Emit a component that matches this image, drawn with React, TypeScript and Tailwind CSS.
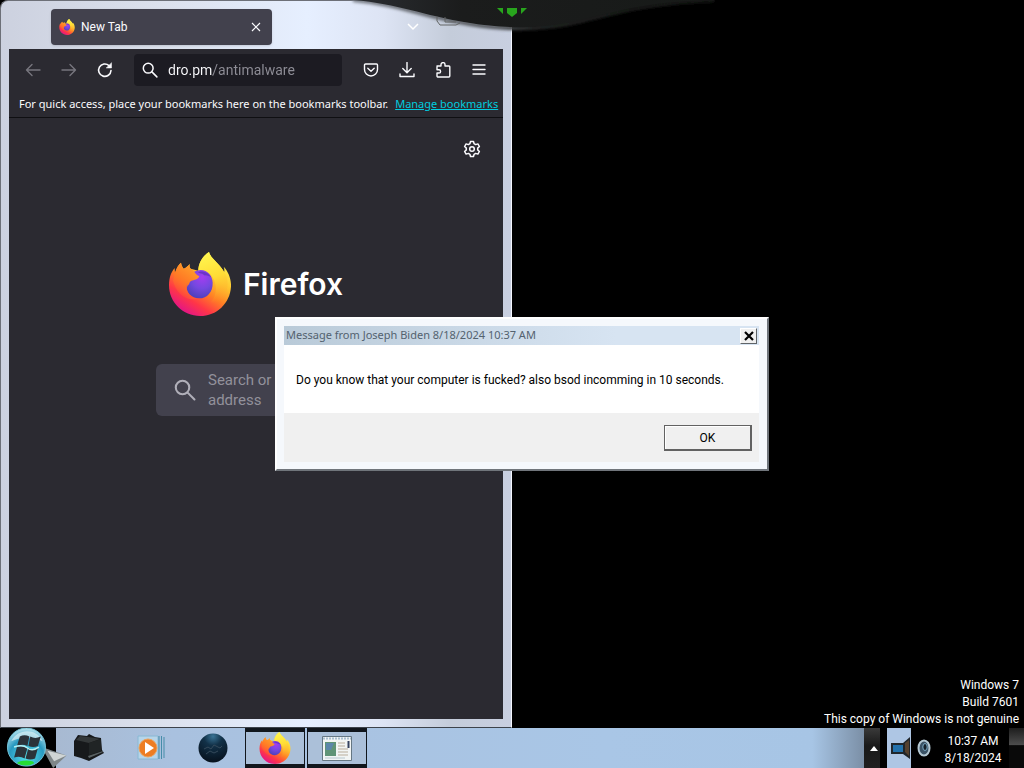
import React from "react";

function FirefoxLogo({ id, className }: { id: string; className: string }) {
  return (
    <svg viewBox="0 0 186 192" className={className} aria-hidden="true">
      <defs>
        <linearGradient id={`${id}-body`} x1="0.8" y1="0.1" x2="0.25" y2="0.95">
          <stop offset="0" stopColor="#fff44f" />
          <stop offset="0.3" stopColor="#ffc52e" />
          <stop offset="0.55" stopColor="#ff8024" />
          <stop offset="0.78" stopColor="#ff3647" />
          <stop offset="1" stopColor="#e31587" />
        </linearGradient>
        <radialGradient id={`${id}-orb`} cx="0.6" cy="0.25" r="0.8">
          <stop offset="0" stopColor="#a33df0" />
          <stop offset="0.5" stopColor="#7548e0" />
          <stop offset="1" stopColor="#4a3fb8" />
        </radialGradient>
        <linearGradient id={`${id}-fox`} x1="0.7" y1="0" x2="0.2" y2="1">
          <stop offset="0" stopColor="#ffa32b" />
          <stop offset="0.5" stopColor="#ff7a25" />
          <stop offset="1" stopColor="#ff4a3c" stopOpacity="0.2" />
        </linearGradient>
        <linearGradient id={`${id}-flame`} x1="0.4" y1="0" x2="0.6" y2="1">
          <stop offset="0" stopColor="#fff64f" />
          <stop offset="0.5" stopColor="#ffdc35" />
          <stop offset="1" stopColor="#ff9a2a" stopOpacity="0" />
        </linearGradient>
      </defs>
      <path
        fill={`url(#${id}-body)`}
        d="M120 0C123 14 140 27 152 41C158 48 162 54 165 61C167 54 166 49 164 44C179 60 187 82 186 104C183 154 143 192 93 192C42 192 0 151 0 100C0 76 7 59 17 48L18 62C23 47 28 39 36 32C37 39 40 45 44 50C51 48 57 42 62 36C61 43 62 47 65 50L88 56C88 32 102 12 120 0Z"
      />
      <path
        fill={`url(#${id}-flame)`}
        d="M120 0C123 14 140 27 152 41C176 68 184 98 166 132C156 152 136 156 126 150C148 126 144 88 124 66C112 56 98 56 88 60C87 32 102 12 120 0Z"
      />
      <path
        fill={`url(#${id}-orb)`}
        d="M84 56C110 48 130 68 131 92C132 120 114 139 91 139C66 139 50 120 52 97C53 76 65 62 84 56Z"
      />
      <path
        fill={`url(#${id}-fox)`}
        d="M18 62C23 47 28 39 36 32C37 39 40 45 44 50C51 48 57 42 62 36C61 43 62 47 65 50C76 56 79 67 91 73C87 84 76 83 66 87C60 90 63 97 56 101C48 112 60 134 84 140C50 150 20 120 12 86Z"
      />
      <path fill="#6a35c8" d="M86 60C102 54 122 64 127 76C116 68 110 72 104 68C99 63 92 66 86 60Z" />
    </svg>
  );
}

function SearchIcon({ className }: { className: string }) {
  return (
    <svg viewBox="0 0 16 16" className={className} fill="none" stroke="currentColor" strokeWidth="1.5" strokeLinecap="round" aria-hidden="true">
      <circle cx="6.2" cy="6.2" r="4.9" />
      <path d="M9.9 9.9l5 5" />
    </svg>
  );
}

const iconProps = {
  viewBox: "0 0 16 16",
  className: "size-4",
  fill: "none",
  stroke: "currentColor",
  strokeWidth: 1.4,
  strokeLinecap: "round" as const,
  strokeLinejoin: "round" as const,
  "aria-hidden": true,
};

function ToolButton({ label, children, dim }: { label: string; children: React.ReactNode; dim?: boolean }) {
  return (
    <button type="button" aria-label={label} className={dim ? "flex size-9 items-center justify-center text-[#77767e]" : "flex size-9 items-center justify-center text-[#fbfbfe]"}>
      {children}
    </button>
  );
}

function BrowserWindow() {
  return (
    <section className="absolute inset-y-0 left-0 flex w-1/2 flex-col rounded-tl-lg border border-r-[#f4f6ff] border-t-[#6d7078] border-b-[#3d434b] border-l-[#6d7078] bg-[linear-gradient(90deg,#ccd1df_0%,#dbe0ec_30%,#e6efff_60%,#dde4f4_75%,#c4ccda_88%,#c8cfe0_100%)] pr-2 pb-2 pl-2">
      <header className="flex h-12 items-center">
        <div className="mt-1 ml-[42px] flex h-9 w-[221px] items-center gap-1.5 rounded bg-[#42414d] px-2 text-[12px] text-[#fbfbfe] shadow">
          <FirefoxLogo id="tab" className="h-4 w-4" />
          <span className="flex-1">New Tab</span>
          <button type="button" aria-label="Close tab" className="flex size-4 items-center justify-center">
            <svg viewBox="0 0 10 10" className="size-2.5" stroke="currentColor" strokeWidth="1.2" aria-hidden="true">
              <path d="M1 1l8 8M9 1L1 9" />
            </svg>
          </button>
        </div>
        <div className="flex flex-1 items-center justify-end pr-[84px] text-white">
          <svg viewBox="0 0 12 8" className="mt-1 h-2 w-3" fill="none" stroke="currentColor" strokeWidth="1.5" aria-hidden="true">
            <path d="M1 1l5 5 5-5" />
          </svg>
        </div>
      </header>

      <div className="flex min-h-0 flex-1 flex-col overflow-hidden bg-[#2b2a31] text-[#fbfbfe]">
        <nav className="flex h-[42px] items-center pl-1.5">
          <ToolButton label="Back" dim>
            <svg {...iconProps}><path d="M15 8H1.5M7 2.5L1.5 8 7 13.5" /></svg>
          </ToolButton>
          <ToolButton label="Forward" dim>
            <svg {...iconProps}><path d="M1 8h13.500M9 2.500L14.500 8 9 13.500" /></svg>
          </ToolButton>
          <ToolButton label="Reload">
            <svg {...iconProps} strokeWidth={1.6}>
              <path d="M14 8.500A6.200 6.200 0 1 1 12 3.600" />
              <path d="M14.500 1v5h-5z" fill="currentColor" strokeWidth="0.5" />
            </svg>
          </ToolButton>
          <div className="ml-[11px] flex h-8 min-w-0 flex-1 items-center gap-2.5 rounded bg-[#1c1b22] pl-2">
            <SearchIcon className="size-4 shrink-0" />
            <input
              aria-label="Address"
              defaultValue="dro.pm/antimalware"
              className="w-full min-w-0 bg-[linear-gradient(90deg,#fbfbfe_45px,#8f8e97_45px)] bg-clip-text text-[14px] leading-5 text-transparent outline-none"
            />
          </div>
          <div className="flex pr-1.5 pl-[11px]">
            <ToolButton label="Save to Pocket">
              <svg {...iconProps}>
                <path d="M2.500 2h11a1 1 0 0 1 1 1v4.500a6.500 6.500 0 0 1-13 0V3a1 1 0 0 1 1-1z" />
                <path d="M4.800 6.300L8 9.300l3.200-3" />
              </svg>
            </ToolButton>
            <ToolButton label="Downloads">
              <svg {...iconProps}><path d="M8 0.500v10M3.800 6.500L8 10.700l4.200-4.200M1 12v2.500h14V12" /></svg>
            </ToolButton>
            <ToolButton label="Extensions">
              <svg {...iconProps}>
                <path d="M2 4H6V2.600a2 2 0 0 1 4 0V4H14a.8.8 0 0 1 .8.800V14a1 1 0 0 1-1 1H3a1 1 0 0 1-1-1v-3h2a1.600 1.600 0 0 0 0-3.200H2V5a1 1 0 0 1 1-1z" />
              </svg>
            </ToolButton>
            <ToolButton label="Menu">
              <svg {...iconProps}><path d="M2 3h12M2 7.500h12M2 12h12" /></svg>
            </ToolButton>
          </div>
        </nav>
        <p className="h-[27px] shrink-0 border-b border-[#0f0f12] pl-2.5 font-['Noto_Sans',sans-serif] text-[11px] leading-[26px] whitespace-nowrap">
          For quick access, place your bookmarks here on the bookmarks toolbar.{" "}
          <a href="#bookmarks" className="ml-1 text-[#00ccdf] underline">Manage bookmarks</a>
        </p>
        <main className="flex flex-1 flex-col">
          <div className="flex justify-end pt-[22px] pr-[22px]">
            <button type="button" aria-label="Personalize new tab">
              <svg viewBox="0 0 18 18" className="size-[18px]" fill="none" stroke="currentColor" strokeWidth="1.500" strokeLinejoin="round" aria-hidden="true">
                <path d="M7.500 1.500h3l.6 2.200 1.500.9 2.300-.7 1.500 2.600-1.700 1.600v1.800l1.700 1.600-1.500 2.600-2.300-.7-1.500.9-.6 2.200h-3l-.6-2.200-1.500-.9-2.300.7-1.500-2.600 1.700-1.600V8.100L1.600 6.500l1.500-2.600 2.300.7 1.500-.9z" />
                <circle cx="9" cy="9" r="2.300" />
              </svg>
            </button>
          </div>
          <div className="mt-[94px] flex items-center justify-center gap-3">
            <FirefoxLogo id="hero" className="h-16 w-[62px]" />
            <h1 className="font-['Inter','Lato',sans-serif] text-[30px] leading-10 font-semibold text-white">Firefox</h1>
          </div>
          <div className="mx-auto mt-12 flex h-[52px] w-[200px] items-center gap-3 rounded-md bg-[#42414d] pl-[18px] text-[#b0afb9]">
            <SearchIcon className="size-[22px] shrink-0" />
            <textarea
              aria-label="Search"
              rows={2}
              placeholder={"Search or\naddress"}
              className="w-full min-w-0 resize-none overflow-hidden bg-transparent text-[15px] leading-5 outline-none placeholder:text-[#92919b]"
            />
          </div>
        </main>
      </div>
    </section>
  );
}

function MessageDialog() {
  return (
    <section role="dialog" aria-labelledby="message-title" className="absolute top-[317px] left-[275px] w-[494px] border-2 border-t-white border-r-[#70757b] border-b-[#70757b] border-l-white bg-[#f5f8fc] pt-[7px] pr-2 pb-[7px] pl-[7px] text-[12px] text-black">
      <header className="flex h-[19px] items-center justify-between bg-[linear-gradient(90deg,#b9cad8,#d7e4f2_70%)] px-0.5">
        <h2 id="message-title" className="font-['Noto_Sans',sans-serif] text-[11px] text-[#53626f]">Message from Joseph Biden 8/18/2024 10:37 AM</h2>
        <button type="button" aria-label="Close" className="flex h-4 w-[17px] items-center justify-center border border-t-white border-r-[#5f6468] border-b-[#5f6468] border-l-white bg-[#f0f0f0]">
          <svg viewBox="0 0 10 10" className="size-2.5" stroke="currentColor" strokeWidth="2.200" aria-hidden="true">
            <path d="M1 1l8 8M9 1L1 9" />
          </svg>
        </button>
      </header>
      <p className="h-[68px] bg-white pl-3 leading-[70px] whitespace-nowrap">
        Do you know that your computer is fucked? also bsod incomming in 10 seconds.
      </p>
      <footer className="flex h-[49px] items-center justify-end bg-[#f0f0f0] pr-[7px]">
        <button type="button" className="h-[26px] w-[88px] border border-r-2 border-b-2 border-[#626262] bg-[#f0f0f0] leading-6 shadow-[inset_1px_1px_0_#ffffff]">OK</button>
      </footer>
    </section>
  );
}

function TopOverlay() {
  return (
    <svg viewBox="0 0 370 40" className="absolute top-0 left-[345px] h-10 w-[370px]" aria-hidden="true">
      <defs>
        <linearGradient id="wedge" x1="0" y1="0" x2="1" y2="0">
          <stop offset="0" stopColor="#2b2e33" />
          <stop offset="0.3" stopColor="#1b1c1c" />
          <stop offset="1" stopColor="#171a18" />
        </linearGradient>
        <linearGradient id="wedge-edge" x1="0" y1="0" x2="1" y2="0">
          <stop offset="0" stopColor="#787d86" />
          <stop offset="0.4" stopColor="#4a4d51" />
          <stop offset="0.5" stopColor="#252726" />
          <stop offset="1" stopColor="#161816" />
        </linearGradient>
        <filter id="wedge-glow" x="-5%" y="-30%" width="110%" height="160%">
          <feGaussianBlur stdDeviation="1.5" />
        </filter>
      </defs>
      <path d="M8 0C55 4 75 16 125 24C155 29 195 31 235 21C280 10 310 2 370 0" fill="none" stroke="url(#wedge-edge)" strokeWidth="4" filter="url(#wedge-glow)" />
      <path d="M8 0C55 4 75 15 125 23C155 28 195 30 235 20C280 9 310 1 370 0Z" fill="url(#wedge)" />
      <path d="M92 17v4l3 4h16l4-2M100 17v5h11" fill="none" stroke="#626564" />
      <g fill="#28a51d">
        <path d="M152 8h6v6z" />
        <path d="M162 8h10v5l-5 4-5-4z" />
        <path d="M182 8h-6v6z" />
      </g>
    </svg>
  );
}

function StartButton() {
  return (
    <button type="button" aria-label="Start" className="flex h-10 w-14 items-center bg-black pl-1.5">
      <svg viewBox="0 0 60 42" className="h-10 w-[60px] shrink-0 overflow-visible" aria-hidden="true">
        <defs>
          <radialGradient id="start-orb" cx="0.5" cy="0.75" r="0.75">
            <stop offset="0" stopColor="#58e3ee" />
            <stop offset="0.6" stopColor="#2899c0" />
            <stop offset="1" stopColor="#b9e4ee" />
          </radialGradient>
        </defs>
        <path d="M36 20L62 29L48 42Z" fill="#7e8688" />
        <path d="M42 24L62 29L49 35Z" fill="#cfd5d5" />
        <circle cx="20" cy="20" r="20" fill="url(#start-orb)" stroke="#75c4d8" />
        <path d="M4 14C10 1 30 -1 37 14C27 8 14 9 4 14Z" fill="#e4f4f8" opacity="0.65" />
        <path d="M13 9q5-3 10 0l-2 10q-5-3-11 0zM24 9q5 3 11 0l-3 10q-5 2-10 0zM10 20q6-2 11 1l-3 11q-5-3-11-1zM22 21q5 3 10 0l-3 11q-5 2-10 0z" fill="#2b333a" />
        <path d="M7 20q9-3 14 1t12-1" fill="none" stroke="#b7f1f4" strokeWidth="1.500" />
        <path d="M10 37q2-3 10-3t8 3q-8 5-18 0z" fill="#27dd35" />
      </svg>
    </button>
  );
}

function Taskbar() {
  return (
    <footer className="flex h-10 shrink-0 bg-black">
      <div className="flex flex-1 items-stretch bg-[linear-gradient(90deg,#a7b6cb_0%,#a9c1df_20%,#a9c6e6_70%,#a7c5e5_94%,#7b8fa6_100%)]">
        <StartButton />
        <button type="button" aria-label="Computer" className="flex w-[66px] items-center justify-center">
          <svg viewBox="0 0 32 28" className="h-7 w-8" aria-hidden="true">
            <path d="M1 7L5 1 14 2l2-2 6 3 6 1 1 12 2 3-15 8-8-3-7-2z" fill="#17191b" />
            <path d="M3 6l4-4 8 1 7 1 5 1-11 4z" fill="#343839" />
            <path d="M16 9l12-4v12l-12 4z" fill="#202425" />
            <path d="M15 22l15-5v1l-14 6z" fill="#596163" />
          </svg>
        </button>
        <button type="button" aria-label="Media Player" className="flex w-[58px] items-center justify-center">
          <svg viewBox="0 0 28 26" className="h-[26px] w-7" aria-hidden="true">
            <path d="M1 1h20v23H1z" fill="#b7d5e9" stroke="#88b8d4" />
            <path d="M22 1v23M24.500 1v23M27 2v21" stroke="#468da8" />
            <circle cx="11" cy="13" r="9" fill="#ed7d22" stroke="#e9a35e" />
            <path d="M8 7l9 6-9 6z" fill="#fff" />
          </svg>
        </button>
        <button type="button" aria-label="Globe" className="flex w-[65px] items-center justify-center">
          <svg viewBox="0 0 30 30" className="size-[30px]" aria-hidden="true">
            <defs>
              <radialGradient id="globe" cx="0.5" cy="0.1" r="0.9">
                <stop offset="0" stopColor="#397395" />
                <stop offset="0.35" stopColor="#123148" />
                <stop offset="1" stopColor="#07111d" />
              </radialGradient>
            </defs>
            <circle cx="15" cy="15" r="14.500" fill="url(#globe)" />
            <path d="M6 16l4-2 3 2 3-4 6 3 2-2M8 21l4-3 4 2 4-2" fill="none" stroke="#34495a" />
          </svg>
        </button>
        <button type="button" aria-label="Firefox" className="flex w-[60px] items-center justify-center border-x border-t-4 border-b-4 border-[#11161c] bg-[#abc0d9]">
          <FirefoxLogo id="task" className="h-8 w-8" />
        </button>
        <button type="button" aria-label="Message" className="ml-0.5 flex w-[60px] items-center justify-center border-x border-t-4 border-b-4 border-[#11161c] bg-[#abc0d9]">
          <svg viewBox="0 0 30 25" className="h-[25px] w-[30px]" aria-hidden="true">
            <path d="M.5.500h29v24H.5z" fill="#f2f5f4" stroke="#657783" />
            <path d="M1 2.500h28" stroke="#a8bed0" strokeWidth="2" strokeDasharray="2 1" />
            <path d="M3 6h11v14H3z" fill="#609476" />
            <path d="M4 7h8l-3 7H4z" fill="#5c87aa" />
            <path d="M16 7h7M16 10h7M16 13h10M16 16h10M16 19h10" stroke="#b9ad9b" />
            <path d="M26.500 5v7" stroke="#354260" strokeWidth="2" />
            <path d="M3 22h20" stroke="#b8c8cf" />
          </svg>
        </button>
      </div>
      <div className="flex text-[12px] text-white">
        <button type="button" aria-label="Show hidden icons" className="flex w-4 items-center justify-center bg-[linear-gradient(180deg,#3a3a3a,#191919_45%,#202020)]">
          <svg viewBox="0 0 8 5" className="ml-1 h-[5px] w-2" aria-hidden="true"><path d="M4 0l4 5H0z" fill="#fff" /></svg>
        </button>
        <button type="button" aria-label="Network" className="ml-[7px] flex w-6 items-center bg-[#aec6e4]">
          <svg viewBox="0 0 24 24" className="size-6" aria-hidden="true">
            <path d="M4 7h12l7-6v22l-7-5H4z" fill="#20262b" />
            <path d="M6 9h10v7H6z" fill="#2371ab" />
            <path d="M18 7l4-3v16l-4-4z" fill="#55412f" />
          </svg>
        </button>
        <button type="button" aria-label="Volume" className="flex w-[26px] items-center justify-center">
          <svg viewBox="0 0 16 18" className="h-[18px] w-4" aria-hidden="true">
            <ellipse cx="8" cy="9" rx="5.500" ry="7.500" fill="#3b5366" stroke="#b3c7d2" strokeWidth="2" />
            <ellipse cx="9" cy="8" rx="2.200" ry="3.500" fill="#15202a" stroke="#7dadc8" />
          </svg>
        </button>
        <time className="flex w-[72px] flex-col items-center justify-center pt-1 text-center leading-[17px]">
          <span>10:37 AM</span>
          <span>8/18/2024</span>
        </time>
        <button type="button" aria-label="Show desktop" className="w-[15px] bg-[linear-gradient(180deg,#1d1d1d_0%,#4d4d4d_42%,#090909_44%)]" />
      </div>
    </footer>
  );
}

export default function App() {
  return (
    <div className="flex min-h-screen flex-col overflow-hidden bg-black font-['Roboto','Noto_Sans',sans-serif]">
      <div className="relative flex flex-1 flex-col items-end justify-end">
        <BrowserWindow />
        <TopOverlay />
        <MessageDialog />
        <div className="pr-[5px] text-right text-[12px] leading-[17px] text-white">
          <p>Windows 7</p>
          <p>Build 7601</p>
          <p>This copy of Windows is not genuine</p>
        </div>
      </div>
      <Taskbar />
    </div>
  );
}
